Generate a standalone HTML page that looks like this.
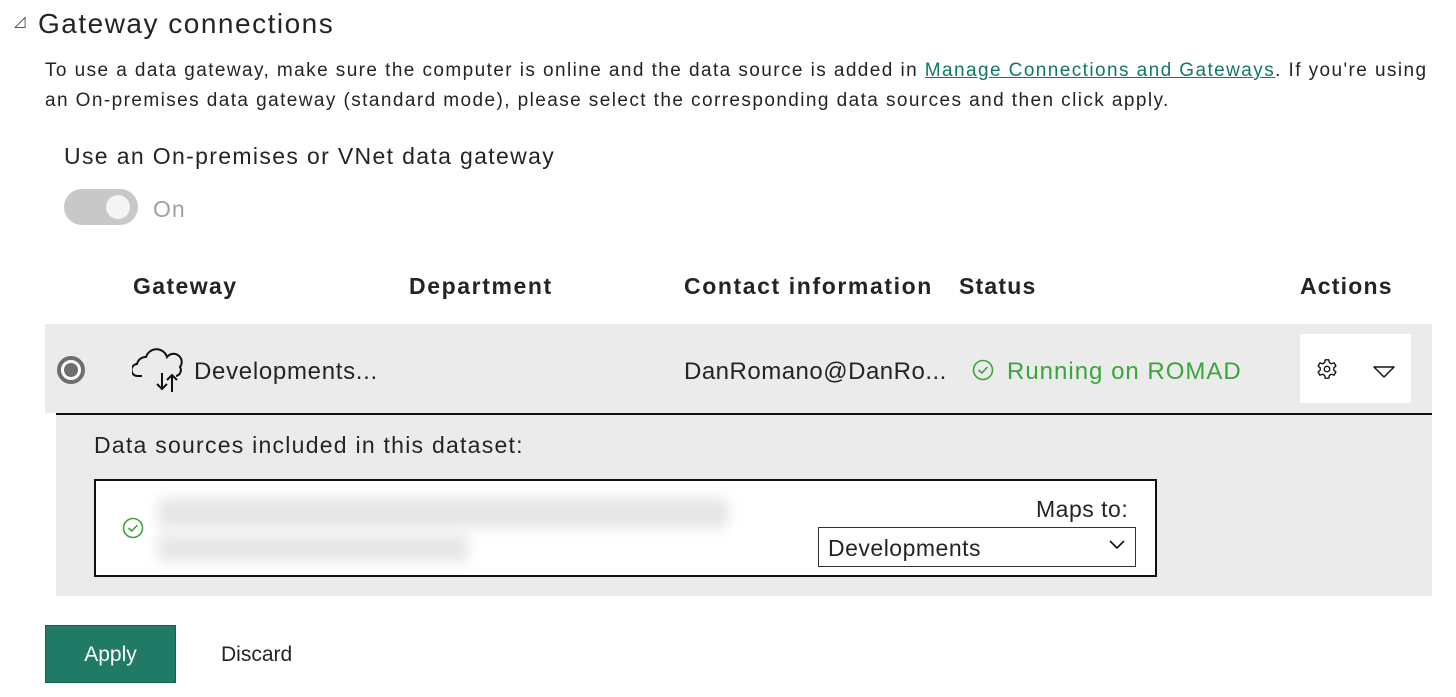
<!DOCTYPE html>
<html><head><style>
body{margin:0;width:1456px;height:697px;background:#fff;font-family:"Liberation Sans",sans-serif;color:#252423;position:relative;overflow:hidden}
.a{position:absolute;white-space:nowrap}
</style></head><body>
<div class="a" style="left:14px;top:12px;font-size:15px;color:#444">◿</div>
<div class="a" style="left:38px;top:8px;font-size:28px;color:#252423;letter-spacing:1.5px">Gateway connections</div>
<div class="a" style="left:45px;top:56px;font-size:19px;line-height:30px;color:#252423;letter-spacing:1.42px">To use a data gateway, make sure the computer is online and the data source is added in <span style="color:#117865;text-decoration:underline">Manage Connections and Gateways</span>. If you're using<br>an On-premises data gateway (standard mode), please select the corresponding data sources and then click apply.</div>
<div class="a" style="left:64px;top:143px;font-size:23px;letter-spacing:1.35px">Use an On-premises or VNet data gateway</div>
<div class="a" style="left:64px;top:189px;width:74px;height:36px;border-radius:18px;background:#c8c8c8"></div>
<div class="a" style="left:106px;top:195px;width:24px;height:24px;border-radius:50%;background:#f4f4f4"></div>
<div class="a" style="left:153px;top:196px;font-size:23px;color:#a0a0a0;letter-spacing:1px">On</div>
<div class="a" style="left:133px;top:273px;font-size:23px;font-weight:bold;letter-spacing:1.4px">Gateway</div>
<div class="a" style="left:409px;top:273px;font-size:23px;font-weight:bold;letter-spacing:1.6px">Department</div>
<div class="a" style="left:684px;top:273px;font-size:23px;font-weight:bold;letter-spacing:1.6px">Contact information</div>
<div class="a" style="left:959px;top:273px;font-size:23px;font-weight:bold;letter-spacing:1.2px">Status</div>
<div class="a" style="left:1300px;top:273px;font-size:23px;font-weight:bold;letter-spacing:1.2px">Actions</div>
<div class="a" style="left:45px;top:324px;width:1387px;height:89px;background:#ebebeb"></div>
<div class="a" style="left:56px;top:413px;width:1376px;height:2px;background:#111"></div>
<div class="a" style="left:56px;top:415px;width:1376px;height:181px;background:#ebebeb"></div>
<div class="a" style="left:57px;top:356px;width:28px;height:28px;border-radius:50%;border:4px solid #6e6e6e;box-sizing:border-box;background:#fff"></div>
<div class="a" style="left:64px;top:363px;width:14px;height:14px;border-radius:50%;background:#6e6e6e"></div>
<svg class="a" style="left:132px;top:345px" width="52" height="48" viewBox="0 0 52 48"><path d="M10 31 H6 A6 6 0 0 1 5 19 A9 9 0 0 1 14 12 A11 11 0 0 1 35 12 A8 8 0 0 1 48 22 A6 6 0 0 1 44 31" fill="none" stroke="#111" stroke-width="2"/><path d="M30 28 V44 M25 39 L30 44 35 39 M40 47 V30 M35 35 L40 30 45 35" fill="none" stroke="#111" stroke-width="2"/></svg>
<div class="a" style="left:194px;top:358px;font-size:24px;letter-spacing:0.7px">Developments...</div>
<div class="a" style="left:684px;top:358px;font-size:24px;letter-spacing:0.5px">DanRomano@DanRo...</div>
<svg class="a" style="left:972px;top:359px" width="22" height="22" viewBox="0 0 22 22"><circle cx="11" cy="11" r="9.5" fill="none" stroke="#3aa53a" stroke-width="1.6"/><path d="M6.5 11 L9.8 14 L15.5 8" fill="none" stroke="#3aa53a" stroke-width="1.6"/></svg>
<div class="a" style="left:1007px;top:358px;font-size:24px;color:#3aa53a;letter-spacing:1px">Running on ROMAD</div>
<div class="a" style="left:1300px;top:334px;width:111px;height:69px;background:#fff"></div>
<svg class="a" style="left:1316px;top:358px" width="22" height="22" viewBox="0 0 24 24"><path d="M10 2h4l.6 3 2.2 1.3 2.9-1 2 3.4-2.3 2.1v2.4l2.3 2.1-2 3.4-2.9-1-2.2 1.3-.6 3h-4l-.6-3-2.2-1.3-2.9 1-2-3.4 2.3-2.1v-2.4L2.3 8.7l2-3.4 2.9 1L9.4 5z" fill="none" stroke="#111" stroke-width="1.5" stroke-linejoin="round"/><circle cx="12" cy="12" r="3" fill="none" stroke="#111" stroke-width="1.5"/></svg>
<svg class="a" style="left:1373px;top:365px" width="22" height="14" viewBox="0 0 22 14"><path d="M1 2 H21 L11 12 Z" fill="none" stroke="#111" stroke-width="1.5" stroke-linejoin="round"/></svg>
<div class="a" style="left:94px;top:432px;font-size:23px;letter-spacing:1.25px">Data sources included in this dataset:</div>
<div class="a" style="left:94px;top:479px;width:1063px;height:98px;border:2px solid #111;box-sizing:border-box;background:#fff"></div>
<svg class="a" style="left:122px;top:517px" width="22" height="22" viewBox="0 0 22 22"><circle cx="11" cy="11" r="9.5" fill="none" stroke="#3aa53a" stroke-width="1.6"/><path d="M6.5 11 L9.8 14 L15.5 8" fill="none" stroke="#3aa53a" stroke-width="1.6"/></svg>
<div class="a" style="left:158px;top:498px;width:570px;height:30px;background:#e6e6e6;filter:blur(6px)"></div>
<div class="a" style="left:158px;top:534px;width:310px;height:28px;background:#e6e6e6;filter:blur(6px)"></div>
<div class="a" style="left:1036px;top:496px;font-size:23px;letter-spacing:0.5px">Maps to:</div>
<div class="a" style="left:818px;top:527px;width:318px;height:40px;border:1px solid #333;box-sizing:border-box;background:#fff"></div>
<div class="a" style="left:828px;top:535px;font-size:23px;letter-spacing:0.5px">Developments</div>
<svg class="a" style="left:1109px;top:540px" width="16" height="10" viewBox="0 0 16 10"><path d="M1 1 L8 8 L15 1" fill="none" stroke="#111" stroke-width="1.6"/></svg>
<div class="a" style="left:45px;top:625px;width:131px;height:58px;background:#217a65;border:1px solid #1a5e4f;box-sizing:border-box"></div>
<div class="a" style="left:45px;top:643px;width:131px;text-align:center;font-size:21px;color:#fff">Apply</div>
<div class="a" style="left:221px;top:643px;font-size:21px">Discard</div>
</body></html>
